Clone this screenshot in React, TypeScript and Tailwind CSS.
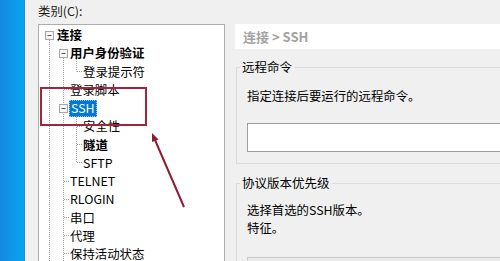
type Node = {
  text: string;
  level: 0 | 1 | 2;
  bold?: boolean;
  selected?: boolean;
};

const nodes: Node[] = [
  { text: "连接", level: 0, bold: true },
  { text: "用户身份验证", level: 1, bold: true },
  { text: "登录提示符", level: 2 },
  { text: "登录脚本", level: 1 },
  { text: "SSH", level: 1, selected: true },
  { text: "安全性", level: 2 },
  { text: "隧道", level: 2, bold: true },
  { text: "SFTP", level: 2 },
  { text: "TELNET", level: 1 },
  { text: "RLOGIN", level: 1 },
  { text: "串口", level: 1 },
  { text: "代理", level: 1 },
  { text: "保持活动状态", level: 1 },
];

const indent = ["pl-[18px]", "pl-[31px]", "pl-[44px]"];

function MinusBox({ x, y }: { x: number; y: number }) {
  return (
    <g>
      <rect x={x - 4} y={y - 4} width={8} height={8} fill="#f7f7f7" stroke="#a6a6a6" />
      <line x1={x - 2} y1={y} x2={x + 2} y2={y} stroke="#555" />
    </g>
  );
}

function TreeLines() {
  const dot = { stroke: "#a0a0a0", strokeDasharray: "1 1" };
  const leaf1 = [64.5, 156.5, 174.5, 192.5, 210.5, 228.5];
  const leaf2 = [46.5, 101.5, 119.5, 137.5];
  return (
    <svg className="pointer-events-none absolute left-0 top-0" width="186" height="240">
      <line x1={10.5} y1={15} x2={10.5} y2={240} {...dot} />
      <line x1={24.5} y1={33} x2={24.5} y2={240} {...dot} />
      <line x1={37.5} y1={34} x2={37.5} y2={46.5} {...dot} />
      <line x1={37.5} y1={90} x2={37.5} y2={137.5} {...dot} />
      {leaf1.map((y) => (
        <line key={y} x1={25} y1={y} x2={30} y2={y} {...dot} />
      ))}
      {leaf2.map((y) => (
        <line key={y} x1={38} y1={y} x2={43} y2={y} {...dot} />
      ))}
      <MinusBox x={10.5} y={10.5} />
      <MinusBox x={24.5} y={28.5} />
      <MinusBox x={24.5} y={83.5} />
    </svg>
  );
}

function GroupBox({ title, children }: { title: string; children: React.ReactNode }) {
  return (
    <fieldset className="ml-[1px] mr-[-12px] border border-[#dcdcdc]">
      <legend className="ml-[3px] px-[2px] text-[12.5px] leading-[14px] text-black">{title}</legend>
      <div className="pl-[10px]">{children}</div>
    </fieldset>
  );
}

export default function App() {
  return (
    <div className="relative flex h-[261px] w-[500px] overflow-hidden bg-[#f0f0f0] font-[family-name:'Noto_Sans_CJK_SC','Noto_Sans',sans-serif] text-[12.4px] text-black">
      <div className="w-[25px] shrink-0 border-r border-[#3f7fc0] bg-gradient-to-r from-[#1488e0] to-[#06a6f0]" />

      <div className="ml-[13px] w-[187px] shrink-0">
        <div className="h-[22px] leading-[22px] text-[#1a1a1a]">类别(C):</div>
        <div className="relative mt-[2px] h-[260px] border border-[#adadad] bg-white pt-[1px]">
          <TreeLines />
          {nodes.map((n) => (
            <div
              key={n.text}
              className={[
                "relative flex h-[18.25px] items-center whitespace-nowrap",
                indent[n.level],
                n.bold ? "font-bold" : "",
              ].join(" ")}
            >
              {n.selected ? (
                <span className="ml-[-1px] border border-dotted border-[#9cc6f0] bg-[#0078d7] px-[1px] leading-[15px] text-white">
                  {n.text}
                </span>
              ) : (
                <span className="leading-[16px]">{n.text}</span>
              )}
            </div>
          ))}
        </div>
      </div>

      <div className="ml-[10px] min-w-0 flex-1 pt-[24px]">
        <div className="flex h-[25px] items-center bg-white pl-[8px] text-[13px] font-bold text-[#a3a3a3]">
          连接 &gt; SSH
        </div>

        <div className="mt-[11px]">
          <GroupBox title="远程命令">
            <p className="mt-[13px] leading-[18px]">指定连接后要运行的远程命令。</p>
            <div className="mb-[11px] mt-[18px] h-[29px] border border-[#9d9d9d] bg-white" />
          </GroupBox>
        </div>

        <div className="mt-[12px]">
          <GroupBox title="协议版本优先级">
            <p className="mt-[11px] leading-[18px]">选择首选的SSH版本。</p>
            <p className="leading-[18px]">特征。</p>
            <div className="mt-[20px] h-[30px] border border-[#c8c8c8] bg-[#e9e9e9]" />
          </GroupBox>
        </div>
      </div>

      <svg className="pointer-events-none absolute left-0 top-0" width="500" height="261">
        <rect x={41} y={88} width={105} height={37} fill="none" stroke="#a3253c" strokeWidth={2} />
        <line x1={184} y1={207} x2={155} y2={140} stroke="#8e1c33" strokeWidth={2} />
        <polygon points="152,133 158.5,139.5 152,142" fill="#8e1c33" />
      </svg>
    </div>
  );
}
